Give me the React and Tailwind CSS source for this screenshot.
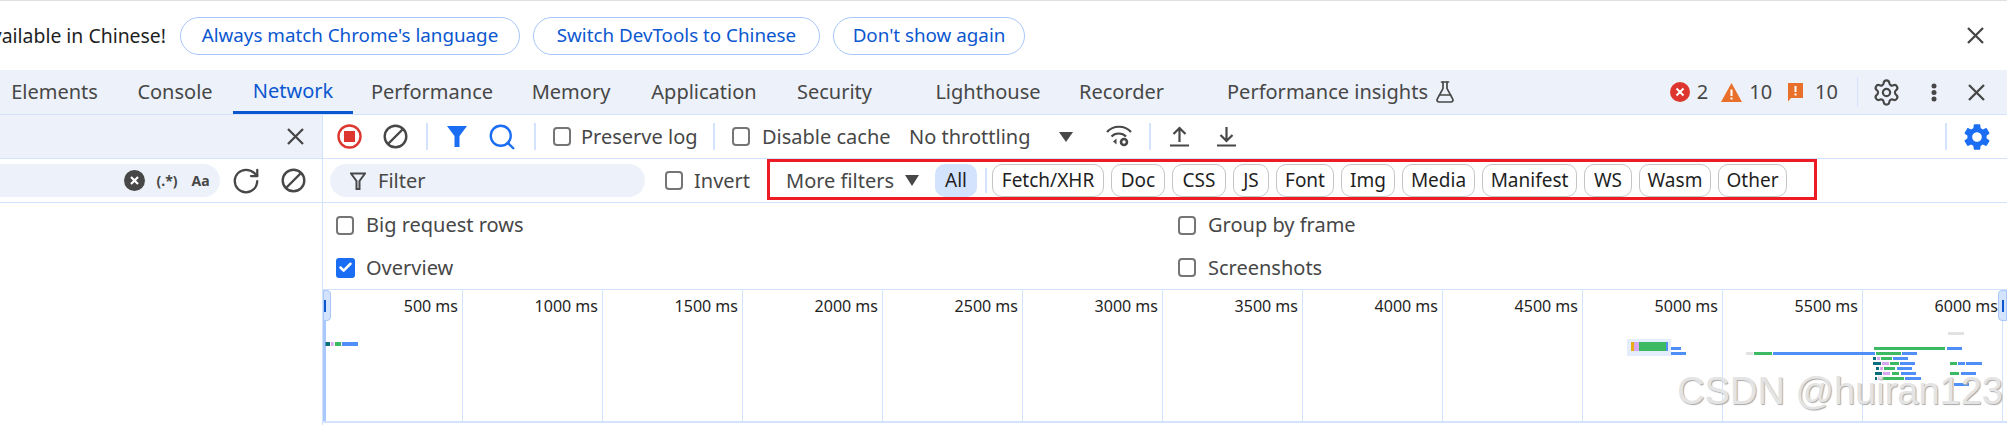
import { Settings, FlaskConical, RotateCw, Check, Search } from "lucide-react";
import { MdSettings } from "react-icons/md";

const tabs = [
  { name: "Elements", cls: "w-[125px] -ml-[8px]" },
  { name: "Console", cls: "w-[116px]" },
  { name: "Network", cls: "w-[120px] text-[#0b57d0] border-b-[3px] border-[#0b57d0]" },
  { name: "Performance", cls: "w-[158px]" },
  { name: "Memory", cls: "w-[120px]" },
  { name: "Application", cls: "w-[146px]" },
  { name: "Security", cls: "w-[115px]" },
  { name: "Lighthouse", cls: "w-[144px] ml-[24px]" },
  { name: "Recorder", cls: "w-[123px]" },
];

const chips = [
  { name: "Fetch/XHR", cls: "w-[112px]" },
  { name: "Doc", cls: "w-[54px]" },
  { name: "CSS", cls: "w-[54px]" },
  { name: "JS", cls: "w-[36px]" },
  { name: "Font", cls: "w-[58px]" },
  { name: "Img", cls: "w-[54px]" },
  { name: "Media", cls: "w-[73px]" },
  { name: "Manifest", cls: "w-[95px]" },
  { name: "WS", cls: "w-[48px]" },
  { name: "Wasm", cls: "w-[72px]" },
  { name: "Other", cls: "w-[69px]" },
];

const marks = ["500 ms", "1000 ms", "1500 ms", "2000 ms", "2500 ms", "3000 ms", "3500 ms", "4000 ms", "4500 ms", "5000 ms", "5500 ms", "6000 ms"];

const TEAL = "#0b6e7f";
const PURPLE = "#d9a6f0";
const GREEN = "#3cba63";
const BLUE = "#4f8ff7";
const GRAY = "#e2e2e2";

// x0, x1, y, h, colour
const bars = [
  [325.5, 330, 342, 4, TEAL], [331, 333.5, 342, 4, PURPLE], [335, 341, 342, 4, GREEN], [342, 358, 342, 4, BLUE],
  [1631, 1634, 342, 9, "#e8ab17"], [1634, 1639, 342, 9, PURPLE], [1639, 1666, 342, 9, GREEN], [1666, 1668, 342, 9, BLUE],
  [1671, 1681, 347, 3, BLUE], [1671, 1686, 352, 3, BLUE],
  [1746, 1753, 352, 3, GRAY], [1754, 1772, 352, 3, GREEN], [1773, 1875, 352, 3, BLUE],
  [1874, 1945, 347, 3, GREEN], [1947, 1962, 347, 3, BLUE], [1948, 1964, 332, 3, GRAY],
  [1876, 1901, 352, 3, GREEN], [1902, 1917, 352, 3, BLUE],
  [1873, 1876, 357, 3, TEAL], [1877, 1880, 357, 3, PURPLE], [1881, 1892, 357, 3, GREEN], [1893, 1908, 357, 3, BLUE],
  [1873, 1881, 362, 3, TEAL], [1882, 1889, 362, 3, PURPLE], [1890, 1899, 362, 3, GREEN], [1900, 1915, 362, 3, BLUE],
  [1950, 1957, 362, 3, GREEN], [1958, 1965, 362, 3, BLUE], [1966, 1982, 362, 3, BLUE],
  [1876, 1879, 367, 3, TEAL], [1880, 1883, 367, 3, PURPLE], [1884, 1895, 367, 3, GREEN], [1897, 1912, 367, 3, BLUE],
  [1875, 1882, 372, 3, TEAL], [1883, 1890, 372, 3, PURPLE], [1892, 1899, 372, 3, GREEN], [1901, 1916, 372, 3, BLUE],
  [1950, 1959, 372, 3, GREEN], [1961, 1976, 372, 3, BLUE],
  [1875, 1877, 377, 3, TEAL], [1878, 1882, 377, 3, PURPLE], [1883, 1904, 377, 3, GREEN], [1905, 1921, 377, 3, BLUE],
  [1950, 1953, 382, 3, GREEN], [1954, 1969, 383, 3, BLUE],
];

function Close({ className }) {
  return (
    <svg viewBox="0 0 17 17" className={`w-[17px] h-[17px] shrink-0 ${className}`} fill="none" stroke="#474747" strokeWidth="2.3">
      <path d="M1 1l15 15M16 1 1 16" />
    </svg>
  );
}

function Block({ className }) {
  return (
    <svg viewBox="0 0 25 25" className={className} fill="none" stroke="#474747" strokeWidth="2.4">
      <circle cx="12.5" cy="12.5" r="10.8" />
      <path d="M5 20 20 5" />
    </svg>
  );
}

function Box({ checked }) {
  if (checked) {
    return (
      <div className="w-[19px] h-[20px] rounded-[3px] bg-[#1b6ef3] flex items-center justify-center shrink-0">
        <Check size={15} color="#fff" strokeWidth={4} />
      </div>
    );
  }
  return <div className="w-[18px] h-[19px] rounded-[4px] border-2 border-[#757575] shrink-0"></div>;
}

function Divider({ className }) {
  return <div className={`w-[2px] h-[27px] bg-[#d3e3fd] shrink-0 ${className}`}></div>;
}

export default function App() {
  return (
    <div className="relative w-[2007px] h-[425px] overflow-hidden bg-white text-[#474747] text-[20px] font-['Noto_Sans','Open_Sans',sans-serif] whitespace-nowrap">
      {/* Language infobar */}
      <div className="h-[70px] border-t border-[#e0e0e0] flex items-center text-[18.8px]">
        <div className="w-[166px] flex justify-end overflow-hidden text-[#1f1f1f] text-[19.4px]">
          <span className="shrink-0">DevTools is now available in Chinese!</span>
        </div>
        <button className="ml-[14px] w-[340px] h-[38px] rounded-full border border-[#a8c7fa] text-[#0b57d0]">Always match Chrome's language</button>
        <button className="ml-[13px] w-[287px] h-[38px] rounded-full border border-[#a8c7fa] text-[#0b57d0]">Switch DevTools to Chinese</button>
        <button className="ml-[13px] w-[192px] h-[38px] rounded-full border border-[#a8c7fa] text-[#0b57d0]">Don't show again</button>
        <div className="flex-1"></div>
        <Close className="mr-[23px]" />
      </div>

      {/* Tab strip */}
      <div className="h-[45px] bg-[#edf2fa] border-b border-[#d3e3fd] flex items-center">
        {tabs.map((t) => (
          <div key={t.name} className={`h-[44px] flex items-center justify-center shrink-0 ${t.cls}`}>{t.name}</div>
        ))}
        <div className="ml-[44px] flex items-center">
          <span>Performance insights</span>
          <FlaskConical size={24} strokeWidth={1.7} className="ml-[5px]" />
        </div>
        <div className="flex-1"></div>
        <svg viewBox="0 0 20 20" className="w-[20px] h-[20px]">
          <circle cx="10" cy="10" r="10" fill="#dc362e" />
          <path d="M6.5 6.5l7 7M13.5 6.5l-7 7" stroke="#fff" strokeWidth="2" />
        </svg>
        <span className="ml-[7px]">2</span>
        <svg viewBox="0 0 21 19" className="ml-[13px] w-[21px] h-[19px]">
          <path d="M10.5 0 21 19H0z" fill="#e8702a" />
          <path d="M10.5 6.5v6.5M10.5 14.5v2" stroke="#fff" strokeWidth="2" />
        </svg>
        <span className="ml-[7px]">10</span>
        <svg viewBox="0 0 17 20" className="ml-[15px] w-[17px] h-[20px]">
          <path d="M1 1h15v15H4l-3 3.5z" fill="#e8702a" />
          <path d="M8.5 4v6M8.5 11.5v2" stroke="#fff" strokeWidth="2" />
        </svg>
        <span className="ml-[11px]">10</span>
        <div className="ml-[19px] w-px h-[30px] bg-[#d3e3fd]"></div>
        <Settings size={29} strokeWidth={1.8} className="ml-[14px]" />
        <svg viewBox="0 0 6 19" className="ml-[30px] w-[6px] h-[19px]" fill="#474747">
          <circle cx="3" cy="3" r="2.5" />
          <circle cx="3" cy="9.5" r="2.5" />
          <circle cx="3" cy="16" r="2.5" />
        </svg>
        <Close className="ml-[31px] mr-[22px]" />
      </div>

      <div className="flex h-[310px]">
        {/* Search drawer */}
        <div className="w-[323px] border-r border-[#d3e3fd] shrink-0">
          <div className="h-[44px] bg-[#edf2fa] border-b border-[#d3e3fd] flex items-center justify-end">
            <Close className="mr-[18px]" />
          </div>
          <div className="h-[44px] border-b border-[#d3e3fd] flex items-center">
            <div className="w-[220px] h-[33px] bg-[#edf2fa] rounded-r-full flex items-center justify-end">
              <svg viewBox="0 0 21 21" className="w-[21px] h-[21px]">
                <circle cx="10.5" cy="10.5" r="10.5" fill="#474747" />
                <path d="M7 7l7 7M14 7l-7 7" stroke="#fff" strokeWidth="2.2" />
              </svg>
              <span className="ml-[11px] w-[22px] text-center text-[14px] font-bold">(.*)</span>
              <span className="ml-[13px] mr-[10px] w-[19px] text-center text-[14px] font-bold">Aa</span>
            </div>
            <RotateCw size={30} strokeWidth={1.8} className="ml-[11px]" />
            <Block className="ml-[20px] w-[25px] h-[25px]" />
          </div>
        </div>

        <div className="flex-1 min-w-0">
          {/* Network toolbar */}
          <div className="h-[44px] border-b border-[#d3e3fd] flex items-center">
            <svg viewBox="0 0 25 25" className="ml-[14px] w-[25px] h-[25px]">
              <circle cx="12.5" cy="12.5" r="11" fill="none" stroke="#dc362e" strokeWidth="2.4" />
              <rect x="7" y="7" width="11" height="11" fill="#dc362e" />
            </svg>
            <Block className="ml-[21px] w-[25px] h-[25px]" />
            <Divider className="ml-[18px]" />
            <svg viewBox="0 0 20 21" className="ml-[19px] w-[20px] h-[21px]">
              <path d="M0 0h20L12.5 10v11h-5V10z" fill="#1b6ef3" />
            </svg>
            <Search size={30} strokeWidth={1.9} color="#1b6ef3" className="ml-[20px]" />
            <Divider className="ml-[17px]" />
            <div className="ml-[17px]"><Box /></div>
            <span className="ml-[10px] w-[120px]">Preserve log</span>
            <Divider className="ml-[12px]" />
            <div className="ml-[17px]"><Box /></div>
            <span className="ml-[12px] w-[129px]">Disable cache</span>
            <span className="ml-[18px] w-[123px]">No throttling</span>
            <div className="ml-[27px] w-0 h-0 border-x-[7px] border-x-transparent border-t-[10px] border-t-[#474747]"></div>
            <svg viewBox="0 0 26 23" fill="none" stroke="#474747" strokeWidth="2.2" className="ml-[33px] w-[26px] h-[23px]">
              <path d="M1 7C7 0 19 0 25 7" />
              <path d="M5.5 11.5c3.5-4 11-4 14.5 0" />
              <path d="M10.5 13.5 7 16.5l3.5 3z" fill="#474747" stroke="none" />
              <circle cx="18" cy="17" r="3" strokeWidth="2.6" />
            </svg>
            <Divider className="ml-[17px]" />
            <svg viewBox="0 0 21 21" fill="none" stroke="#474747" strokeWidth="2.2" className="ml-[18px] w-[21px] h-[21px]">
              <path d="M10.5 16V2M4.5 8l6-6 6 6M1 19.5h19" />
            </svg>
            <svg viewBox="0 0 21 21" fill="none" stroke="#474747" strokeWidth="2.2" className="ml-[26px] w-[21px] h-[21px]">
              <path d="M10.5 1v14M4.5 9l6 6 6-6M1 19.5h19" />
            </svg>
            <div className="flex-1"></div>
            <Divider />
            <MdSettings size={32} color="#1b6ef3" className="ml-[14px] mr-[14px]" />
          </div>

          {/* Filter row */}
          <div className="h-[44px] border-b border-[#d3e3fd] flex items-center">
            <div className="ml-[7px] w-[315px] h-[33px] rounded-full bg-[#edf2fa] flex items-center shrink-0">
              <svg viewBox="0 0 16 18" fill="none" stroke="#474747" strokeWidth="2" className="ml-[20px] w-[16px] h-[18px]">
                <path d="M1 1.5h14L9.5 9v8h-3V9z" />
              </svg>
              <span className="ml-[12px]">Filter</span>
            </div>
            <div className="ml-[20px]"><Box /></div>
            <span className="ml-[11px] w-[56px]">Invert</span>
            {/* Red annotation box from the screenshot */}
            <div className="ml-[17px] w-[1050px] h-[41px] self-start border-[3px] border-[#ed1c24] flex items-start pt-[2px] shrink-0 text-[19px]">
              <span className="ml-[16px] w-[107px] h-[33px] leading-[33px] text-[20px]">More filters</span>
              <div className="ml-[12px] mt-[11px] w-0 h-0 border-x-[7px] border-x-transparent border-t-[11px] border-t-[#474747]"></div>
              <div className="ml-[16px] w-[42px] h-[33px] rounded-[10px] bg-[#d3e3fd] text-[#1f1f1f] flex items-center justify-center">All</div>
              <div className="ml-[8px] mt-[4px] w-[2px] h-[25px] bg-[#d3e3fd]"></div>
              <div className="ml-[5px] flex gap-[7px]">
                {chips.map((c) => (
                  <div key={c.name} className={`h-[33px] rounded-[10px] border border-[#c4c7c5] text-[#1f1f1f] flex items-center justify-center ${c.cls}`}>{c.name}</div>
                ))}
              </div>
            </div>
          </div>

          {/* Settings */}
          <div className="h-[87px] border-b border-[#d3e3fd] grid grid-cols-[842px_1fr] grid-rows-2 pt-[1px]">
            <div className="flex items-center pl-[13px]"><Box /><span className="ml-[12px]">Big request rows</span></div>
            <div className="flex items-center pl-[13px]"><Box /><span className="ml-[12px]">Group by frame</span></div>
            <div className="flex items-center pl-[13px]"><Box checked /><span className="ml-[11px]">Overview</span></div>
            <div className="flex items-center pl-[13px]"><Box /><span className="ml-[12px]">Screenshots</span></div>
          </div>

          {/* Overview timeline */}
          <div className="relative h-[133px] border-b-2 border-[#d3e3fd] flex text-[#1f1f1f]">
            {marks.map((m) => (
              <div key={m} className="h-full w-[140px] shrink-0 border-r border-[#d3e3fd] pr-[4px] pt-[4px] text-right text-[16px] leading-[24px]">{m}</div>
            ))}
            <div className="absolute left-0 top-0 bottom-0 w-[3px] bg-[#a8c7fa]"></div>
            <div className="absolute left-0 top-0 w-[8px] h-[31px] bg-[#d3e3fd] border border-[#a8c7fa] rounded-r-[4px] flex items-center">
              <div className="w-[2px] h-[12px] bg-[#0b57d0]"></div>
            </div>
            <div className="absolute right-0 top-0 w-[9px] h-[31px] bg-[#d3e3fd] border border-[#a8c7fa] rounded-l-[4px] flex items-center justify-center">
              <div className="w-[2px] h-[12px] bg-[#0b57d0]"></div>
            </div>
            <svg viewBox="323 290 1684 132" className="absolute left-0 top-0 w-[1684px] h-[132px]">
              <rect x="1627" y="339" width="44" height="17" fill="#e3edfb" />
              {bars.map(([a, b, y, h, c], i) => (
                <rect key={i} x={a} y={y} width={b - a} height={h} fill={c} />
              ))}
            </svg>
          </div>
        </div>
      </div>

      {/* CSDN watermark */}
      <div className="absolute right-[4px] bottom-[14px] text-[38px] leading-[40px] text-[#e4e4e4] font-['Liberation_Sans',sans-serif] [text-shadow:1px_1px_1px_#a8a8a8]">CSDN @huiran123</div>
    </div>
  );
}
